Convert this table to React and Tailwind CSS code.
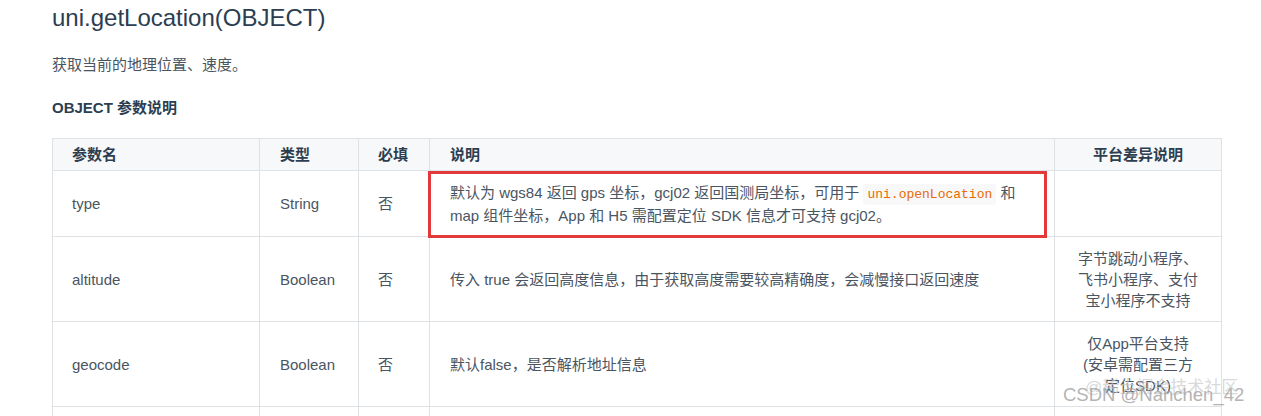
import React from "react";

const font = { fontFamily: '"Liberation Sans", "Noto Sans CJK SC", sans-serif' };

const rows = [
  {
    name: "type",
    type: "String",
    required: "否",
    desc: (
      <>
        默认为 wgs84 返回 gps 坐标，gcj02 返回国测局坐标，可用于{" "}
        <code className="font-['Liberation_Mono',monospace] text-[13px] text-[#e96900] bg-[#f8f8f8] px-[4px] py-[3px] rounded-[3px]">
          uni.openLocation
        </code>{" "}
        和
        <br />
        map 组件坐标，App 和 H5 需配置定位 SDK 信息才可支持 gcj02。
      </>
    ),
    platform: "",
  },
  {
    name: "altitude",
    type: "Boolean",
    required: "否",
    desc: "传入 true 会返回高度信息，由于获取高度需要较高精确度，会减慢接口返回速度",
    platform: (
      <>
        字节跳动小程序、
        <br />
        飞书小程序、支付
        <br />
        宝小程序不支持
      </>
    ),
  },
  {
    name: "geocode",
    type: "Boolean",
    required: "否",
    desc: "默认false，是否解析地址信息",
    platform: (
      <>
        仅App平台支持
        <br />
        (安卓需配置三方
        <br />
        定位SDK)
      </>
    ),
  },
  {
    name: "isHighAccuracy",
    type: "Boolean",
    required: "否",
    desc: "开启高精度定位",
    platform: "App、H5、微信小程序",
  },
];

const App = () => {
  return (
    <div className="h-[416px] overflow-hidden bg-white pl-[52px]" style={font}>
      {/* Title */}
      <h1 className="mt-[3px] text-[24px] leading-[30px] text-[#2c3e50]">
        uni.getLocation(OBJECT)
      </h1>

      <p className="mt-[21px] text-[15px] leading-[21px] text-[#4a5562]">
        获取当前的地理位置、速度。
      </p>

      <h4 className="mt-[22px] text-[15px] leading-[21px] font-bold text-[#2c3e50]">
        OBJECT 参数说明
      </h4>

      {/* Param table */}
      <div className="relative mt-[20px] w-[1169px]">
        <table className="w-[1169px] table-fixed border-collapse text-[15px] leading-[21px] text-[#4a5562]">
          <colgroup>
            <col className="w-[207px]" />
            <col className="w-[99px]" />
            <col className="w-[71px]" />
            <col className="w-[625px]" />
            <col className="w-[167px]" />
          </colgroup>
          <thead>
            <tr className="bg-[#f7f8f9] text-[#2c3e50]">
              <th className="border border-[#dfe2e5] px-[19px] py-[5px] text-left font-bold">参数名</th>
              <th className="border border-[#dfe2e5] px-[20px] py-[5px] text-left font-bold">类型</th>
              <th className="border border-[#dfe2e5] px-[19px] py-[5px] text-left font-bold">必填</th>
              <th className="border border-[#dfe2e5] px-[20px] py-[5px] text-left font-bold">说明</th>
              <th className="border border-[#dfe2e5] px-[10px] py-[5px] text-center font-bold">平台差异说明</th>
            </tr>
          </thead>
          <tbody>
            {rows.map((r) => (
              <tr key={r.name}>
                <td className="border border-[#dfe2e5] px-[19px] py-[10.5px] align-middle">{r.name}</td>
                <td className="border border-[#dfe2e5] px-[20px] py-[10.5px] align-middle">{r.type}</td>
                <td className="border border-[#dfe2e5] px-[19px] py-[10.5px] align-middle">{r.required}</td>
                <td className="border border-[#dfe2e5] px-[20px] py-[10.5px] align-middle whitespace-nowrap">{r.desc}</td>
                <td className="border border-[#dfe2e5] px-[10px] py-[10.5px] align-middle text-center">{r.platform}</td>
              </tr>
            ))}
          </tbody>
        </table>

        {/* Red annotation box */}
        <div className="absolute left-[376px] top-[33px] h-[67px] w-[619px] border-[3px] border-[#e23a3a]"></div>
      </div>

      {/* Watermark */}
      <div className="absolute left-[1085px] top-[378px] text-[17px] leading-[20px] text-[#c8c8c8]/70">
        @稀土掘金技术社区
      </div>
      <div className="absolute left-[1063px] top-[384px] text-[18.5px] leading-[22px] text-[#a0a0a0]/80">
        CSDN @Nanchen_42
      </div>
    </div>
  );
};

export default App;
